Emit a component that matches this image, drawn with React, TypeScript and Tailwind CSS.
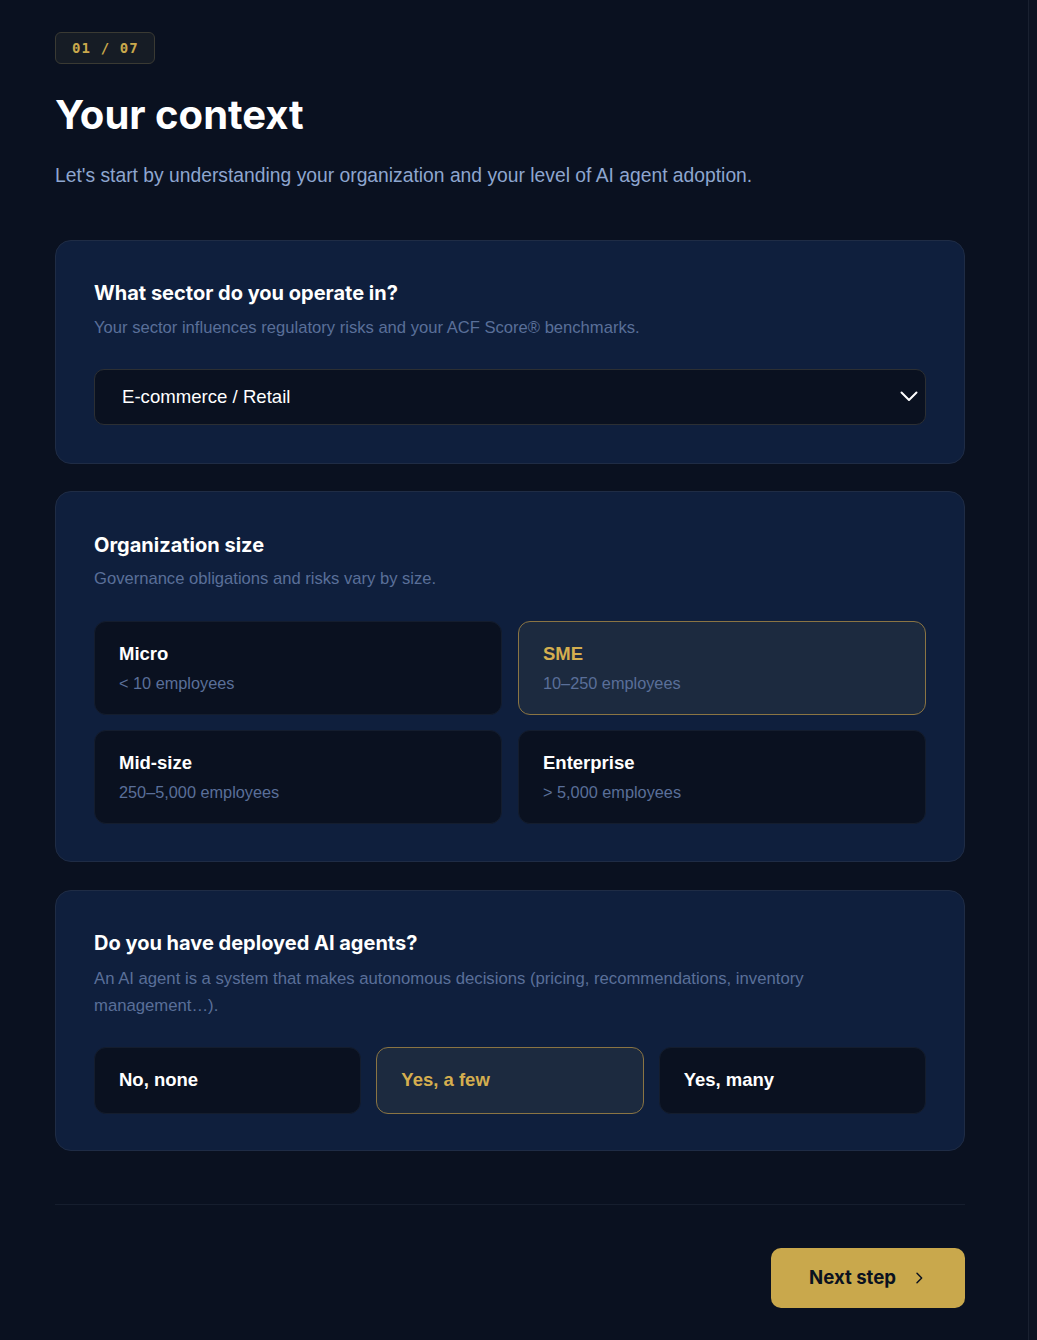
import { useState } from "react";

const sizes = [
    { label: "Micro", desc: "< 10 employees" },
    { label: "SME", desc: "10–250 employees" },
    { label: "Mid-size", desc: "250–5,000 employees" },
    { label: "Enterprise", desc: "> 5,000 employees" },
];

const agents = ["No, none", "Yes, a few", "Yes, many"];

const heading = "font-['Inter',sans-serif] font-bold";
const body = "font-['Liberation_Sans',Arial,sans-serif]";

export default function App() {
    const [size, setSize] = useState("SME");
    const [agent, setAgent] = useState("Yes, a few");

    return (
        <div className="min-h-[1340px] bg-[#0a1120] flex">
            <div className="w-[1029px] border-r border-[#1a2130] px-[55px] pt-8 pb-8">
                <div className="inline-flex items-center h-8 pl-[16px] pr-[15px] rounded-md border border-[#3a3a33] bg-[#161c25] font-['DejaVu_Sans_Mono',monospace] text-[14px] font-bold text-[#c9a84c] tracking-[0.08em]">
                    01 / 07
                </div>

                <h1 className={`${heading} text-[40px] leading-[48px] text-white mt-[27px]`}>Your context</h1>
                <p className={`${body} text-[19.3px] leading-[28px] text-[#8ea6cf] mt-[23px]`}>
                    Let's start by understanding your organization and your level of AI agent adoption.
                </p>

                <div className="mt-[50px] flex flex-col gap-[27px] w-[910px]">
                    <section className="rounded-2xl border border-[#1f2c45] bg-[#0f1f3d] px-[38px] pt-[40px] pb-[38px]">
                        <h2 className={`${heading} text-[20px] leading-6 text-white`}>What sector do you operate in?</h2>
                        <p className={`${body} text-[16.6px] text-[#5a6f99] mt-[11px]`}>
                            Your sector influences regulatory risks and your ACF Score® benchmarks.
                        </p>
                        <div className="mt-[28px] h-[56px] rounded-[10px] border border-[#2c2f33] bg-[#0a1120] flex items-center justify-between pl-[27px] pr-[7px]">
                            <span className={`${body} text-[18.6px] text-white`}>E-commerce / Retail</span>
                            <svg xmlns="http://www.w3.org/2000/svg" width="18" height="11" viewBox="0 0 18 11" fill="none" stroke="white" strokeWidth="2">
                                <path strokeLinecap="round" strokeLinejoin="round" d="M1.5 1.5 9 9l7.5-7.5" />
                            </svg>
                        </div>
                    </section>

                    <section className="rounded-2xl border border-[#1f2c45] bg-[#0f1f3d] px-[38px] pt-[41px] pb-[37px]">
                        <h2 className={`${heading} text-[20px] leading-6 text-white`}>Organization size</h2>
                        <p className={`${body} text-[16.6px] text-[#5a6f99] mt-[10px]`}>
                            Governance obligations and risks vary by size.
                        </p>
                        <div className="mt-[29px] grid grid-cols-2 gap-x-4 gap-y-[15px]">
                            {sizes.map((s) => {
                                const active = size === s.label;
                                return (
                                    <button
                                        key={s.label}
                                        onClick={() => setSize(s.label)}
                                        className={`h-[94px] rounded-xl border text-left px-6 flex flex-col justify-center ${active ? "border-[#8a7443] bg-[#1c2a3f]" : "border-[#141d2e] bg-[#0a1120]"}`}
                                    >
                                        <span className={`${body} font-bold text-[18.5px] leading-[26px] ${active ? "text-[#d4ae4f]" : "text-white"}`}>{s.label}</span>
                                        <span className={`${body} text-[16.3px] leading-[24px] text-[#5a6f99] mt-[4px]`}>{s.desc}</span>
                                    </button>
                                );
                            })}
                        </div>
                    </section>

                    <section className="mt-[1px] rounded-2xl border border-[#1f2c45] bg-[#0f1f3d] px-[38px] pt-[40px] pb-[36px]">
                        <h2 className={`${heading} text-[20px] leading-6 text-white`}>Do you have deployed AI agents?</h2>
                        <p className={`${body} text-[16.7px] leading-[27px] text-[#5a6f99] mt-[10px] max-w-[730px]`}>
                            An AI agent is a system that makes autonomous decisions (pricing, recommendations, inventory management…).
                        </p>
                        <div className="mt-[28px] grid grid-cols-3 gap-[15px]">
                            {agents.map((a) => {
                                const active = agent === a;
                                return (
                                    <button
                                        key={a}
                                        onClick={() => setAgent(a)}
                                        className={`h-[67px] rounded-xl border text-left px-6 ${active ? "border-[#8a7443] bg-[#1c2a3f]" : "border-[#141d2e] bg-[#0a1120]"}`}
                                    >
                                        <span className={`${body} font-bold text-[18.5px] ${active ? "text-[#d4ae4f]" : "text-white"}`}>{a}</span>
                                    </button>
                                );
                            })}
                        </div>
                    </section>
                </div>

                <div className="w-[910px] mt-[53px] border-t border-[#161e2e] pt-[43px] flex justify-end">
                    <button className="h-[60px] w-[194px] rounded-[10px] bg-[#c9a84c] flex items-center justify-center gap-[15px]">
                        <span className={`${heading} text-[18.6px] text-[#0a1120]`}>Next step</span>
                        <svg xmlns="http://www.w3.org/2000/svg" fill="none" viewBox="0 0 24 24" strokeWidth="2.2" stroke="#0a1120" className="w-4 h-4">
                            <path strokeLinecap="round" strokeLinejoin="round" d="m9 5 7 7-7 7" />
                        </svg>
                    </button>
                </div>
            </div>
            <div className="flex-1 bg-[#0c1322]"></div>
        </div>
    );
}
